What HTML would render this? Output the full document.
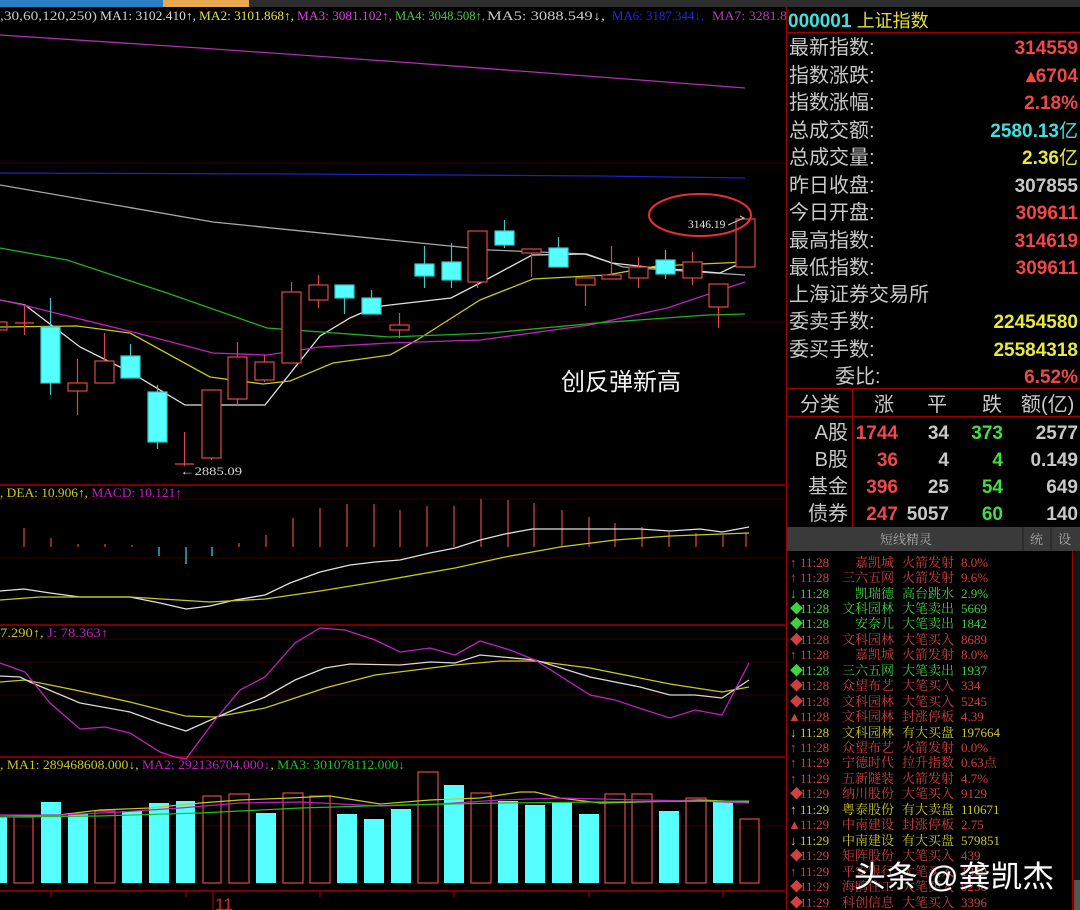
<!DOCTYPE html>
<html><head><meta charset="utf-8"><style>
html,body{margin:0;padding:0;background:#000;}
svg{display:block}
.t{font-family:"Liberation Serif","Noto Serif CJK SC",serif;}
.s{font-family:"Liberation Sans","Noto Sans CJK SC",sans-serif;}
</style></head><body>
<svg width="1080" height="910" viewBox="0 0 1080 910" xmlns="http://www.w3.org/2000/svg">
<rect width="1080" height="910" fill="#000"/>
<rect x="0" y="0" width="1080" height="7" fill="#2e2e2e"/>
<rect x="0" y="0" width="163" height="7" fill="#2a7fc4"/>
<rect x="163" y="0" width="86" height="7" fill="#e8a850"/>
<g class="t" font-size="12.5" lengthAdjust="spacingAndGlyphs">
<text x="0" y="20" fill="#c8c8c8" textLength="97" lengthAdjust="spacingAndGlyphs">,30,60,120,250)</text>
<text x="100" y="20" fill="#d8d8d8" textLength="96" lengthAdjust="spacingAndGlyphs">MA1: 3102.410↑,</text>
<text x="199" y="20" fill="#e0e040" textLength="95" lengthAdjust="spacingAndGlyphs">MA2: 3101.868↑,</text>
<text x="297" y="20" fill="#e040e0" textLength="95" lengthAdjust="spacingAndGlyphs">MA3: 3081.102↑,</text>
<text x="395" y="20" fill="#40d040" textLength="90" lengthAdjust="spacingAndGlyphs">MA4: 3048.508↑,</text>
<text x="487" y="20" fill="#c8c8c8" textLength="118" lengthAdjust="spacingAndGlyphs">MA5: 3088.549↓,</text>
<text x="612" y="20" fill="#2828d8" textLength="92" lengthAdjust="spacingAndGlyphs">MA6: 3187.344↓,</text>
<text x="712" y="20" fill="#b040b0" textLength="75" lengthAdjust="spacingAndGlyphs">MA7: 3281.8</text>
</g>
<g stroke="#3a0000" stroke-width="1">
<line x1="0" y1="163" x2="785" y2="163"/>
<line x1="0" y1="322" x2="785" y2="322"/>
<line x1="0" y1="499" x2="785" y2="499"/>
<line x1="0" y1="558" x2="785" y2="558"/>
<line x1="0" y1="639" x2="785" y2="639"/>
<line x1="0" y1="662" x2="785" y2="662"/>
<line x1="0" y1="695" x2="785" y2="695"/>
<line x1="0" y1="826" x2="785" y2="826"/>
</g>
<g stroke="#a00000" stroke-width="1.5">
<line x1="0" y1="485" x2="785" y2="485"/>
<line x1="0" y1="625" x2="785" y2="625"/>
<line x1="0" y1="757" x2="785" y2="757"/>
<line x1="0" y1="891" x2="785" y2="891"/>
</g>
<g fill="none" stroke-width="1.3">
<polyline stroke="#b030b0" points="0,35 200,48 400,62 600,77 745,88"/>
<polyline stroke="#2020c0" points="0,173 300,174 600,176 745,178"/>
<polyline stroke="#a8a8a8" points="0,185 213,222 390,240 490,250 587,254 623,267 745,275"/>
<polyline stroke="#e0e0e0" points="0,300 25,305 80,347 130,372 185,405 265,405 320,336 350,318 375,307 390,305 451,298 482,282 532,255 585,254 612,263 647,267 720,273 743,262"/>
<polyline stroke="#c8c820" points="0,327 77,326 130,333 210,377 263,384 290,381 333,363 390,355 417,340 480,300 533,279 607,275 657,266 745,262"/>
<polyline stroke="#c020c0" points="0,300 23,305 133,332 213,353 267,355 320,347 390,343 480,340 590,325 667,308 745,282"/>
<polyline stroke="#20b020" points="0,248 67,260 167,293 267,328 390,337 490,333 597,323 707,315 745,314"/>
</g>
<g stroke-width="1.2">
<g stroke="#e04848" fill="none">
<rect x="-2" y="322" width="9" height="8"/>
<line x1="24.5" y1="306" x2="24.5" y2="335"/><line x1="15" y1="323" x2="34" y2="323"/>
<line x1="77.5" y1="359" x2="77.5" y2="415"/><rect x="68" y="383" width="19" height="8" fill="#000"/>
<line x1="104.5" y1="333" x2="104.5" y2="361"/><rect x="95" y="361" width="19" height="22" fill="#000"/>
<line x1="184.5" y1="432" x2="184.5" y2="466"/><line x1="175" y1="464" x2="194" y2="464"/>
<line x1="211.5" y1="458" x2="211.5" y2="460"/><rect x="202" y="390" width="19" height="68" fill="#000"/>
<line x1="237.5" y1="342" x2="237.5" y2="405"/><rect x="228" y="357" width="19" height="42" fill="#000"/>
<line x1="264.5" y1="355" x2="264.5" y2="382"/><rect x="255" y="362" width="19" height="18" fill="#000"/>
<line x1="291.5" y1="282" x2="291.5" y2="292"/><rect x="282" y="292" width="19" height="71" fill="#000"/>
<line x1="318.5" y1="275" x2="318.5" y2="308"/><rect x="309" y="285" width="19" height="15" fill="#000"/>
<line x1="399.5" y1="313" x2="399.5" y2="338"/><rect x="390" y="325" width="19" height="5" fill="#000"/>
<line x1="477.5" y1="282" x2="477.5" y2="288"/><rect x="468" y="231" width="19" height="51" fill="#000"/>
<line x1="531.5" y1="253" x2="531.5" y2="277"/><rect x="522" y="249" width="19" height="4" fill="#000"/>
<line x1="585.5" y1="285" x2="585.5" y2="306"/><rect x="576" y="278" width="19" height="7" fill="#000"/>
<line x1="611.5" y1="246" x2="611.5" y2="279"/><rect x="602" y="275" width="19" height="4" fill="#000"/>
<line x1="638.5" y1="257" x2="638.5" y2="288"/><rect x="629" y="267" width="19" height="11" fill="#000"/>
<line x1="692.5" y1="252" x2="692.5" y2="285"/><rect x="683" y="262" width="19" height="16" fill="#000"/>
<line x1="718.5" y1="307" x2="718.5" y2="328"/><rect x="709" y="284" width="19" height="23" fill="#000"/>
<rect x="736" y="219" width="19" height="48" fill="#000"/>
</g>
<g stroke="#40c8c8" fill="#55ffff">
<line x1="50.5" y1="298" x2="50.5" y2="395"/><rect x="41" y="327" width="19" height="56"/>
<line x1="130.5" y1="344" x2="130.5" y2="378"/><rect x="121" y="356" width="19" height="22"/>
<line x1="157.5" y1="385" x2="157.5" y2="449"/><rect x="148" y="392" width="19" height="50"/>
<line x1="344.5" y1="285" x2="344.5" y2="314"/><rect x="335" y="285" width="19" height="13"/>
<line x1="371.5" y1="290" x2="371.5" y2="314"/><rect x="362" y="298" width="19" height="16"/>
<line x1="424.5" y1="246" x2="424.5" y2="288"/><rect x="415" y="264" width="19" height="12"/>
<line x1="451.5" y1="243" x2="451.5" y2="288"/><rect x="442" y="262" width="19" height="18"/>
<line x1="504.5" y1="220" x2="504.5" y2="248"/><rect x="495" y="231" width="19" height="14"/>
<line x1="558.5" y1="237" x2="558.5" y2="267"/><rect x="549" y="248" width="19" height="19"/>
<line x1="665.5" y1="250" x2="665.5" y2="279"/><rect x="656" y="260" width="19" height="14"/>
</g>
</g>
<text class="t" x="180" y="475" font-size="12" fill="#d8d8d8" textLength="62" lengthAdjust="spacingAndGlyphs">←2885.09</text>
<ellipse cx="700" cy="215" rx="51" ry="21" fill="none" stroke="#e83030" stroke-width="2"/>
<text class="t" x="688" y="228" font-size="11.5" fill="#e0e0e0">3146.19</text>
<polyline points="728,225 744,218 740,216" fill="none" stroke="#c8c8c8" stroke-width="1"/>
<text class="s" x="561" y="390" font-size="24" fill="#f0f0f0">创反弹新高</text>
<text class="t" x="0" y="497" font-size="12.5" fill="#c8c820" textLength="182" lengthAdjust="spacingAndGlyphs">, DEA: 10.906↑, <tspan fill="#c020c0">MACD: 10.121↑</tspan></text>
<g stroke="#e04848" stroke-width="1.2">
<line x1="24" y1="528" x2="24" y2="547"/><line x1="51" y1="538" x2="51" y2="547"/><line x1="78" y1="544" x2="78" y2="547"/><line x1="105" y1="544" x2="105" y2="547"/><line x1="132" y1="545" x2="132" y2="547"/>
<line x1="239" y1="543" x2="239" y2="547"/><line x1="266" y1="535" x2="266" y2="547"/><line x1="293" y1="518" x2="293" y2="547"/><line x1="320" y1="508" x2="320" y2="547"/><line x1="347" y1="504" x2="347" y2="547"/><line x1="374" y1="504" x2="374" y2="547"/><line x1="400" y1="510" x2="400" y2="547"/><line x1="427" y1="506" x2="427" y2="547"/><line x1="454" y1="506" x2="454" y2="547"/><line x1="481" y1="499" x2="481" y2="547"/><line x1="508" y1="500" x2="508" y2="547"/><line x1="534" y1="503" x2="534" y2="547"/><line x1="562" y1="510" x2="562" y2="547"/><line x1="589" y1="517" x2="589" y2="547"/><line x1="615" y1="523" x2="615" y2="547"/><line x1="642" y1="527" x2="642" y2="547"/><line x1="669" y1="532" x2="669" y2="547"/><line x1="696" y1="533" x2="696" y2="547"/><line x1="723" y1="535" x2="723" y2="547"/><line x1="746" y1="533" x2="746" y2="547"/>
</g>
<g stroke="#40e0e0" stroke-width="1.2">
<line x1="159" y1="547" x2="159" y2="556"/><line x1="186" y1="547" x2="186" y2="564"/><line x1="212" y1="547" x2="212" y2="556"/>
</g>
<g fill="none" stroke-width="1.3">
<polyline stroke="#e0e0e0" points="0,591 24,589 50,593 80,597 130,597 160,603 186,609 210,606 235,600 265,595 290,583 320,572 350,565 375,562 400,560 430,553 455,548 480,540 505,534 532,529 565,529 640,529 670,531 700,529 722,532 749,527"/>
<polyline stroke="#c8c820" points="0,600 40,597 130,597 210,602 265,599 320,591 375,582 455,568 505,557 560,547 615,540 670,536 722,534 749,533"/>
</g>
<text class="t" x="0" y="637" font-size="12.5" fill="#c8c820" textLength="108" lengthAdjust="spacingAndGlyphs">7.290↑, <tspan fill="#c020c0">J: 78.363↑</tspan></text>
<g fill="none" stroke-width="1.3">
<polyline stroke="#c8c820" points="0,682 25,680 75,690 130,702 185,716 215,717 265,708 325,688 375,675 455,665 500,661 535,661 590,668 670,684 722,692 749,687"/>
<polyline stroke="#d8d8d8" points="0,676 20,677 30,682 80,703 130,712 160,723 186,731 215,718 240,707 265,697 295,680 325,668 350,664 400,665 430,662 455,663 480,655 535,660 590,677 640,687 670,695 695,695 722,698 749,680"/>
<polyline stroke="#c020c0" points="0,663 25,672 50,703 80,729 105,727 130,733 160,752 175,757 186,759 215,720 240,690 265,677 295,643 320,628 345,630 375,640 400,652 430,648 455,655 480,641 510,650 535,660 590,695 615,700 645,710 670,718 695,710 722,715 749,663"/>
</g>
<text class="t" x="0" y="769" font-size="12.5" fill="#c8c820" textLength="405" lengthAdjust="spacingAndGlyphs">, MA1: 289468608.000↓, <tspan fill="#c020c0">MA2: 292136704.000↓</tspan>, <tspan fill="#20c020">MA3: 301078112.000↓</tspan></text>
<g fill="#55ffff">
<rect x="0" y="817" width="7" height="66"/><rect x="41" y="802" width="20" height="81"/><rect x="68" y="814" width="20" height="69"/><rect x="122" y="811" width="20" height="72"/><rect x="149" y="803" width="20" height="80"/><rect x="176" y="801" width="19" height="82"/><rect x="256" y="813" width="20" height="70"/><rect x="337" y="814" width="20" height="69"/><rect x="364" y="819" width="20" height="64"/><rect x="391" y="809" width="20" height="74"/><rect x="444" y="785" width="20" height="98"/><rect x="498" y="801" width="20" height="82"/><rect x="525" y="805" width="20" height="78"/><rect x="552" y="802" width="20" height="81"/><rect x="579" y="814" width="20" height="69"/><rect x="659" y="811" width="20" height="72"/><rect x="713" y="801" width="20" height="82"/>
</g>
<g fill="none" stroke="#e04848" stroke-width="1.2">
<rect x="14" y="817" width="19" height="66"/><rect x="95" y="811" width="20" height="72"/><rect x="203" y="796" width="18" height="87"/><rect x="229" y="794" width="20" height="89"/><rect x="283" y="793" width="20" height="90"/><rect x="310" y="796" width="20" height="87"/><rect x="418" y="772" width="20" height="111"/><rect x="471" y="793" width="20" height="90"/><rect x="605" y="794" width="20" height="89"/><rect x="632" y="794" width="20" height="89"/><rect x="686" y="798" width="20" height="85"/><rect x="740" y="819" width="19" height="64"/>
</g>
<g fill="none" stroke-width="1.2">
<polyline stroke="#c8c820" points="0,815 50,816 100,810 150,808 200,803 240,800 290,798 330,796 380,804 430,800 480,798 520,792 535,792 560,798 600,803 640,802 700,800 749,802"/>
<polyline stroke="#c020c0" points="0,815 60,815 120,812 180,808 240,803 300,802 380,806 440,804 500,800 560,798 640,800 700,801 749,803"/>
<polyline stroke="#20c020" points="0,817 100,816 200,813 300,808 400,805 500,803 600,802 749,801"/>
</g>
<g stroke="#a00000" stroke-width="1.2">
<line x1="51" y1="891" x2="51" y2="897"/><line x1="186" y1="891" x2="186" y2="897"/><line x1="320" y1="891" x2="320" y2="897"/><line x1="454" y1="891" x2="454" y2="897"/><line x1="589" y1="891" x2="589" y2="897"/><line x1="723" y1="891" x2="723" y2="897"/>
<line x1="213" y1="891" x2="213" y2="910"/>
</g>
<text class="s" x="215" y="910" font-size="17" fill="#e02020">11</text>

<rect x="786" y="7" width="294" height="903" fill="#000"/>
<line x1="786.5" y1="7" x2="786.5" y2="910" stroke="#a00000" stroke-width="1.2"/>
<text class="s" x="788" y="27" font-size="19" font-weight="bold" fill="#40e0e0">000001 <tspan fill="#e0e040" font-weight="normal" font-size="18">上证指数</tspan></text>
<line x1="787" y1="32.5" x2="1080" y2="32.5" stroke="#a00000" stroke-width="1.2"/>
<g class="s" font-size="20" fill="#c8c8c8">
<text x="789" y="54">最新指数:</text>
<text x="789" y="82">指数涨跌:</text>
<text x="789" y="109">指数涨幅:</text>
<text x="789" y="137">总成交额:</text>
<text x="789" y="164">总成交量:</text>
<text x="789" y="192">昨日收盘:</text>
<text x="789" y="219">今日开盘:</text>
<text x="789" y="247">最高指数:</text>
<text x="789" y="274">最低指数:</text>
<text x="789" y="301">上海证券交易所</text>
<text x="789" y="328">委卖手数:</text>
<text x="789" y="356">委买手数:</text>
<text x="835" y="383">委比:</text>
</g>
<g class="s" font-size="19" font-weight="bold" text-anchor="end">
<text x="1078" y="54" fill="#f04848">314559</text>
<text x="1078" y="82" fill="#f04848">▴6704</text>
<text x="1078" y="109" fill="#f04848">2.18%</text>
<text x="1078" y="137" fill="#40e0e0">2580.13<tspan font-weight="normal">亿</tspan></text>
<text x="1078" y="164" fill="#e8e840">2.36<tspan font-weight="normal">亿</tspan></text>
<text x="1078" y="192" fill="#c8c8c8">307855</text>
<text x="1078" y="219" fill="#f04848">309611</text>
<text x="1078" y="247" fill="#f04848">314619</text>
<text x="1078" y="274" fill="#f04848">309611</text>
<text x="1078" y="328" fill="#e8e840">22454580</text>
<text x="1078" y="356" fill="#e8e840">25584318</text>
<text x="1078" y="383" fill="#f04848">6.52%</text>
</g>
<line x1="787" y1="388.5" x2="1080" y2="388.5" stroke="#a00000" stroke-width="1.2"/>
<line x1="787" y1="416.5" x2="1080" y2="416.5" stroke="#a00000" stroke-width="1.2"/>
<line x1="852.5" y1="388" x2="852.5" y2="527" stroke="#a00000" stroke-width="1.2"/>
<g class="s" font-size="20" fill="#c8c8c8">
<text x="800" y="411">分类</text><text x="874" y="411">涨</text><text x="927" y="411">平</text><text x="982" y="411">跌</text><text x="1021" y="411">额(亿)</text>
<text x="848" y="439" text-anchor="end">A股</text>
<text x="848" y="466" text-anchor="end">B股</text>
<text x="848" y="493" text-anchor="end">基金</text>
<text x="848" y="520" text-anchor="end">债券</text>
</g>
<g class="s" font-size="19" font-weight="bold" text-anchor="end">
<text x="898" y="439" fill="#f04848">1744</text><text x="949" y="439" fill="#c8c8c8">34</text><text x="1003" y="439" fill="#40e040">373</text><text x="1078" y="439" fill="#c8c8c8">2577</text>
<text x="898" y="466" fill="#f04848">36</text><text x="949" y="466" fill="#c8c8c8">4</text><text x="1003" y="466" fill="#40e040">4</text><text x="1078" y="466" fill="#c8c8c8">0.149</text>
<text x="898" y="493" fill="#f04848">396</text><text x="949" y="493" fill="#c8c8c8">25</text><text x="1003" y="493" fill="#40e040">54</text><text x="1078" y="493" fill="#c8c8c8">649</text>
<text x="898" y="520" fill="#f04848">247</text><text x="949" y="520" fill="#c8c8c8">5057</text><text x="1003" y="520" fill="#40e040">60</text><text x="1078" y="520" fill="#c8c8c8">140</text>
</g>
<rect x="787" y="527" width="293" height="24" fill="#3a3a3a"/>
<line x1="1023" y1="527" x2="1023" y2="551" stroke="#222"/><line x1="1051" y1="527" x2="1051" y2="551" stroke="#222"/>
<g class="t" font-size="13" fill="#a8a8a8"><text x="880" y="544">短线精灵</text><text x="1030" y="544">统</text><text x="1058" y="544">设</text></g>
<line x1="1072.5" y1="551" x2="1072.5" y2="910" stroke="#a00000"/>
<rect x="1074" y="551" width="6" height="359" fill="#151515"/>
<rect x="1074" y="880" width="6" height="30" fill="#555"/>
<g class="t" font-size="13">
<g fill="#d04040">
<text x="790" y="567">↑</text><text x="800" y="567">11:28</text><text x="855" y="567">嘉凯城</text><text x="902" y="567">火箭发射</text><text x="961" y="567">8.0%</text>
<text x="790" y="582">↑</text><text x="800" y="582">11:28</text><text x="842" y="582">三六五网</text><text x="902" y="582">火箭发射</text><text x="961" y="582">9.6%</text>
<text x="790" y="644">◆</text><text x="800" y="644">11:28</text><text x="842" y="644">文科园林</text><text x="902" y="644">大笔买入</text><text x="961" y="644">8689</text>
<text x="790" y="659">↑</text><text x="800" y="659">11:28</text><text x="855" y="659">嘉凯城</text><text x="902" y="659">火箭发射</text><text x="961" y="659">8.0%</text>
<text x="790" y="690">◆</text><text x="800" y="690">11:28</text><text x="842" y="690">众望布艺</text><text x="902" y="690">大笔买入</text><text x="961" y="690">334</text>
<text x="790" y="706">◆</text><text x="800" y="706">11:28</text><text x="842" y="706">文科园林</text><text x="902" y="706">大笔买入</text><text x="961" y="706">5245</text>
<text x="788" y="721">▲</text><text x="800" y="721">11:28</text><text x="842" y="721">文科园林</text><text x="902" y="721">封涨停板</text><text x="961" y="721">4.39</text>
<text x="790" y="752">↑</text><text x="800" y="752">11:28</text><text x="842" y="752">众望布艺</text><text x="902" y="752">火箭发射</text><text x="961" y="752">0.0%</text>
<text x="790" y="767">↑</text><text x="800" y="767">11:29</text><text x="842" y="767">宁德时代</text><text x="902" y="767">拉升指数</text><text x="961" y="767">0.63点</text>
<text x="790" y="783">↑</text><text x="800" y="783">11:29</text><text x="842" y="783">五新隧装</text><text x="902" y="783">火箭发射</text><text x="961" y="783">4.7%</text>
<text x="790" y="798">◆</text><text x="800" y="798">11:29</text><text x="842" y="798">纳川股份</text><text x="902" y="798">大笔买入</text><text x="961" y="798">9129</text>
<text x="788" y="829">▲</text><text x="800" y="829">11:29</text><text x="842" y="829">中南建设</text><text x="902" y="829">封涨停板</text><text x="961" y="829">2.75</text>
<text x="790" y="860">◆</text><text x="800" y="860">11:29</text><text x="842" y="860">矩阵股份</text><text x="902" y="860">大笔买入</text><text x="961" y="860">439</text>
<text x="790" y="876">↑</text><text x="800" y="876">11:29</text><text x="842" y="876">平安银行</text><text x="902" y="876">大笔买入</text><text x="961" y="876">1339</text>
<text x="790" y="891">◆</text><text x="800" y="891">11:29</text><text x="842" y="891">海鸥住工</text><text x="902" y="891">大笔买入</text><text x="961" y="891">9236</text>
<text x="790" y="907">◆</text><text x="800" y="907">11:29</text><text x="842" y="907">科创信息</text><text x="902" y="907">大笔买入</text><text x="961" y="907">3396</text>
</g>
<g fill="#40d040">
<text x="790" y="598">↓</text><text x="800" y="598">11:28</text><text x="855" y="598">凯瑞德</text><text x="902" y="598">高台跳水</text><text x="961" y="598">2.9%</text>
<text x="790" y="613">◆</text><text x="800" y="613">11:28</text><text x="842" y="613">文科园林</text><text x="902" y="613">大笔卖出</text><text x="961" y="613">5669</text>
<text x="790" y="628">◆</text><text x="800" y="628">11:28</text><text x="855" y="628">安奈儿</text><text x="902" y="628">大笔卖出</text><text x="961" y="628">1842</text>
<text x="790" y="675">◆</text><text x="800" y="675">11:28</text><text x="842" y="675">三六五网</text><text x="902" y="675">大笔卖出</text><text x="961" y="675">1937</text>
</g>
<g fill="#c8c830">
<text x="790" y="737">↓</text><text x="800" y="737">11:28</text><text x="842" y="737">文科园林</text><text x="902" y="737">有大买盘</text><text x="961" y="737">197664</text>
<text x="790" y="814">↑</text><text x="800" y="814">11:29</text><text x="842" y="814">粤泰股份</text><text x="902" y="814">有大卖盘</text><text x="961" y="814">110671</text>
<text x="790" y="845">↓</text><text x="800" y="845">11:29</text><text x="842" y="845">中南建设</text><text x="902" y="845">有大买盘</text><text x="961" y="845">579851</text>
</g>
</g>
<text class="s" x="854" y="887" font-size="30" fill="#ffffff" stroke="#333" stroke-width="0.8" paint-order="stroke" textLength="200" lengthAdjust="spacingAndGlyphs">头条 @龚凯杰</text>
</svg>
</body></html>
